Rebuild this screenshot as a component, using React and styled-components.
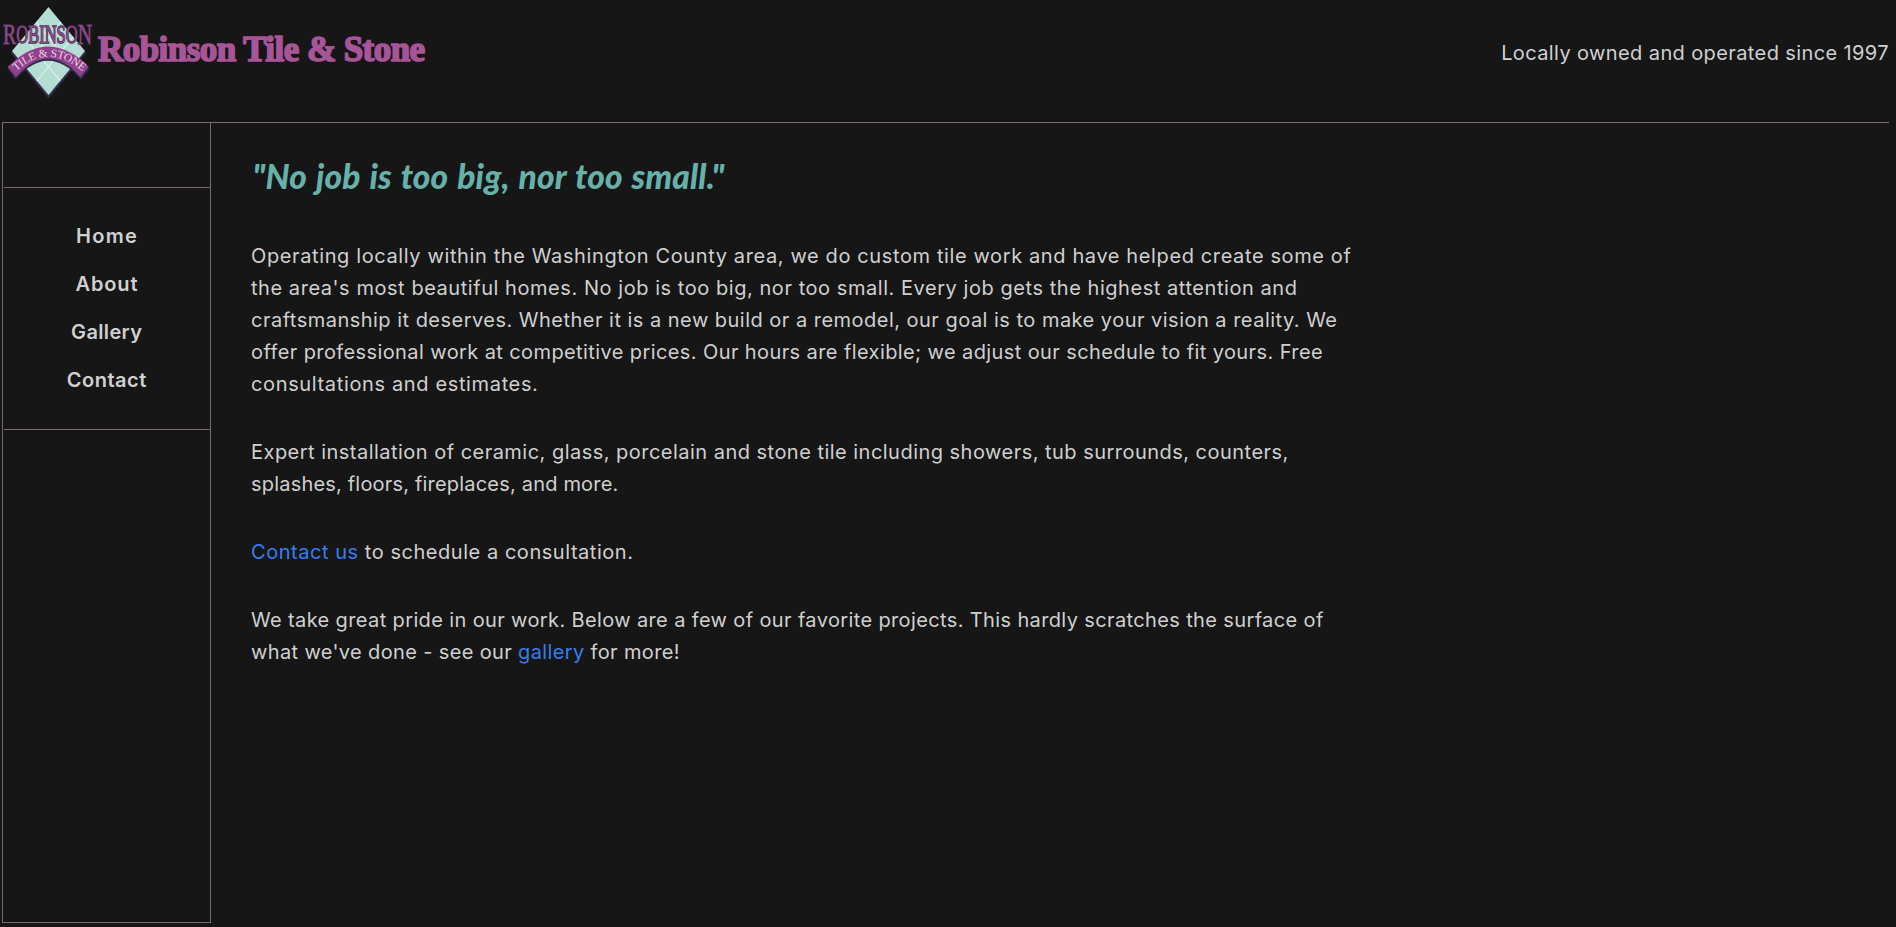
import React from "react";
import styled, { createGlobalStyle } from "styled-components";

const GlobalStyle = createGlobalStyle`
  * { box-sizing: border-box; }
  html, body { margin: 0; background: #161616; }
  body { overflow: hidden; }
`;

const Page = styled.div`
  display: flex;
  flex-direction: column;
  height: 927px;
  padding: 0 7px 4px 2px;
  background: #161616;
  color: #d0d0d0;
  font-family: Inter, "Open Sans", sans-serif;
  font-size: 20px;
  line-height: 32px;
`;

const Header = styled.header`
  display: flex;
  align-items: flex-start;
  justify-content: space-between;
  height: 122px;
  flex: none;
`;

const Brand = styled.div`
  display: flex;
  align-items: flex-start;
`;

const LogoArt = styled.svg`
  display: block;
  width: 94px;
  height: 104px;
  flex: none;
  overflow: visible;
`;

const SiteName = styled.h1`
  margin: 28px 0 0 2px;
  color: #a75498;
  font: bold 35px/44px "Liberation Serif", serif;
  letter-spacing: -0.55px;
  white-space: nowrap;
  -webkit-text-stroke: 1.7px #a75498;
`;

const Tagline = styled.p`
  margin: 37px 0 0;
  white-space: nowrap;
  letter-spacing: 0.39px;
`;

const Main = styled.div`
  display: flex;
  flex: 1;
  border-top: 1px solid #7b6a66;
`;

const Sidebar = styled.aside`
  display: flex;
  flex-direction: column;
  width: 209px;
  flex: none;
  border: 1px solid #7b6a66;
  border-top: 0;
  padding-left: 1px;
`;

const Nav = styled.nav`
  display: flex;
  flex-direction: column;
  align-items: center;
  gap: 16px;
  height: 243px;
  margin-top: 64px;
  padding: 32px 1px 0 0;
  border-top: 1px solid #7b6a66;
  border-bottom: 1px solid #7b6a66;
`;

const NavLink = styled.a`
  color: #d0d0d0;
  font-weight: 600;
  letter-spacing: ${(p) => p.$track}px;
  margin-right: -${(p) => p.$track}px;
`;

const Content = styled.main`
  padding: 29px 0 0 40px;
`;

const Quote = styled.h2`
  margin: 0 0 40px 1.5px;
  color: #67b1ab;
  font: italic 900 33.5px/48px Lato, sans-serif;
  word-spacing: 1.6px;
  letter-spacing: 0.16px;
  white-space: nowrap;
`;

const Paragraph = styled.p`
  margin: 0 0 36px;
`;

const Line = styled.span`
  display: block;
  white-space: nowrap;
  letter-spacing: ${(p) => p.$track}px;
`;

const TextLink = styled.a`
  color: #347ff0;
`;

function Logo() {
  return (
    <LogoArt viewBox="2 0 94 104">
      <defs>
        <clipPath id="tile">
          <path d="M48.5 7 85 51 48.5 95 12 51Z" />
        </clipPath>
        <path id="ribbonText" d="M15.500 72Q48 41.500 83 72" />
      </defs>
      <path d="M48.5 9 86 53 48.5 98.500 11 53Z" fill="#342e50" />
      <path d="M48.5 7 85 51 48.5 95 12 51Z" fill="#b4ddd3" />
      <g clipPath="url(#tile)" stroke="#e6f5ef" strokeWidth="1.1">
        <path d="M36 22 72 66M24 37 61 82M61 22 25 66M73 37 36 82" />
      </g>
      <text
        x="3"
        y="44"
        fontFamily="Liberation Serif, serif"
        fontSize="30"
        fill="#95458c"
        stroke="#413151"
        strokeWidth="1.5"
        paintOrder="stroke"
        textLength="89"
        lengthAdjust="spacingAndGlyphs"
      >
        R<tspan fontSize="25" dy="-1">OBINSO</tspan><tspan dy="1">N</tspan>
      </text>
      <path d="M8 69 13 64Q48 33 84 64L89.500 69 81 79.500Q48 42 15.500 79.500Z" fill="#342e50" />
      <path d="M7.500 67 12.500 62.500Q48 31 84 62L88.500 67 80.500 77Q48 40 16 77Z" fill="#91418b" />
      <text fontFamily="Liberation Serif, serif" fontSize="11.500" fill="#ead5e7">
        <textPath href="#ribbonText" startOffset="1" textLength="74" lengthAdjust="spacing">TILE &amp; STONE</textPath>
      </text>
    </LogoArt>
  );
}

const links = [
  { label: "Home", track: 1.3 },
  { label: "About", track: 0.9 },
  { label: "Gallery", track: 0.35 },
  { label: "Contact", track: 0.5 },
];

export default function App() {
  return (
    <Page>
      <GlobalStyle />
      <Header>
        <Brand>
          <Logo />
          <SiteName>Robinson Tile &amp; Stone</SiteName>
        </Brand>
        <Tagline>Locally owned and operated since 1997</Tagline>
      </Header>
      <Main>
        <Sidebar>
          <Nav>
            {links.map((l) => (
              <NavLink key={l.label} $track={l.track}>{l.label}</NavLink>
            ))}
          </Nav>
        </Sidebar>
        <Content>
          <Quote>"No job is too big, nor too small."</Quote>
          <Paragraph>
            <Line $track={0.615}>Operating locally within the Washington County area, we do custom tile work and have helped create some of</Line>
            <Line $track={0.55}>the area's most beautiful homes. No job is too big, nor too small. Every job gets the highest attention and</Line>
            <Line $track={0.48}>craftsmanship it deserves. Whether it is a new build or a remodel, our goal is to make your vision a reality. We</Line>
            <Line $track={0.4}>offer professional work at competitive prices. Our hours are flexible; we adjust our schedule to fit yours. Free</Line>
            <Line $track={0.64}>consultations and estimates.</Line>
          </Paragraph>
          <Paragraph>
            <Line $track={0.475}>Expert installation of ceramic, glass, porcelain and stone tile including showers, tub surrounds, counters,</Line>
            <Line $track={0.19}>splashes, floors, fireplaces, and more.</Line>
          </Paragraph>
          <Paragraph>
            <Line $track={0.54}><TextLink>Contact us</TextLink> to schedule a consultation.</Line>
          </Paragraph>
          <Paragraph>
            <Line $track={0.37}>We take great pride in our work. Below are a few of our favorite projects. This hardly scratches the surface of</Line>
            <Line $track={0.36}>what we've done - see our <TextLink>gallery</TextLink> for more!</Line>
          </Paragraph>
        </Content>
      </Main>
    </Page>
  );
}
